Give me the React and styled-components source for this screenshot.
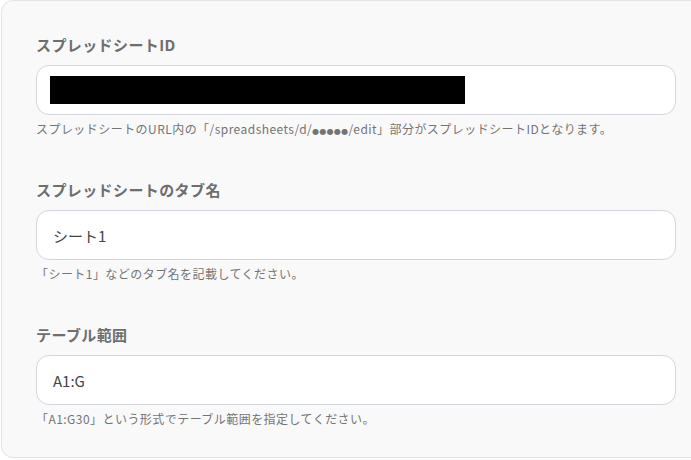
import React from "react";
import styled, { createGlobalStyle } from "styled-components";

const Global = createGlobalStyle`
  html, body { margin: 0; padding: 0; background: #ffffff; overflow: hidden; }
  body { font-family: "Noto Sans CJK JP", "Noto Sans", sans-serif; }
`;

const Card = styled.div`
  margin-left: 1px;
  width: 720px;
  box-sizing: border-box;
  background: #f9f9fa;
  border: 1px solid #e3e3e5;
  border-radius: 12px;
  padding: 33px 0 29px 34px;
  display: flex;
  flex-direction: column;
  gap: 41px;
`;

const Field = styled.div`
  display: flex;
  flex-direction: column;
`;

const Label = styled.div`
  font-size: 15px;
  line-height: 22px;
  font-weight: 700;
  letter-spacing: 0.4px;
  color: #6e6e6e;
  margin-bottom: 9px;
`;

const InputBox = styled.div`
  width: 640px;
  height: 50px;
  box-sizing: border-box;
  background: #ffffff;
  border: 1px solid #d3d6dc;
  border-radius: 13px;
  display: flex;
  align-items: center;
  padding-left: 16px;
  font-size: 15px;
  color: #444444;
`;

const Redacted = styled.div`
  width: 415px;
  height: 28px;
  margin-left: -3px;
  background: #000000;
`;

const Hint = styled.div`
  margin-top: 5px;
  font-size: 12px;
  line-height: 18px;
  height: 18px;
  letter-spacing: 0.45px;
  color: #747474;
`;

const Dots = styled.span`
  font-family: "DejaVu Sans", sans-serif;
  font-size: 8px;
  line-height: 0;
  letter-spacing: 0.3px;
`;

const fields = [
  {
    label: "スプレッドシートID",
    value: null,
    hint: (
      <>
        スプレッドシートのURL内の「/spreadsheets/d/<Dots>●●●●●</Dots>/edit」部分がスプレッドシートIDとなります。
      </>
    ),
  },
  {
    label: "スプレッドシートのタブ名",
    value: "シート1",
    hint: "「シート1」などのタブ名を記載してください。",
  },
  {
    label: "テーブル範囲",
    value: "A1:G",
    hint: "「A1:G30」という形式でテーブル範囲を指定してください。",
  },
];

export default function App() {
  return (
    <>
      <Global />
      <Card>
        {fields.map((f) => (
          <Field key={f.label}>
            <Label>{f.label}</Label>
            <InputBox>{f.value === null ? <Redacted /> : f.value}</InputBox>
            <Hint>{f.hint}</Hint>
          </Field>
        ))}
      </Card>
    </>
  );
}
